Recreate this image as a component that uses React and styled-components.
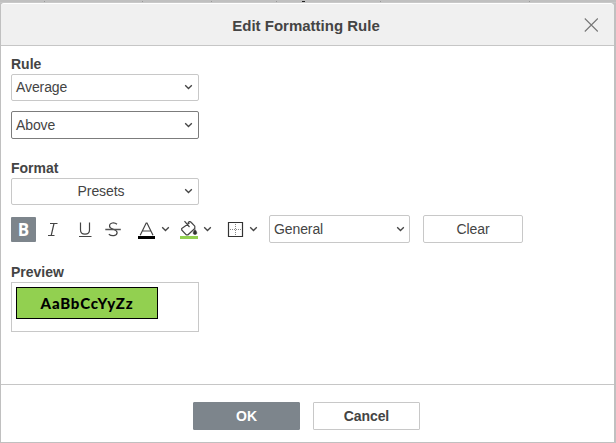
import React from "react";
import styled, { createGlobalStyle } from "styled-components";

const GlobalStyle = createGlobalStyle`
  * { box-sizing: border-box; }
  body {
    margin: 0;
    background: #c0c0c0;
    color: #444;
    font: 14px/16px "Liberation Sans", Arial, sans-serif;
    overflow: hidden;
  }
  button { font: inherit; color: inherit; padding: 0; }
`;

const Page = styled.div`
  width: 616px;
  height: 443px;
  padding: 3px 2px 1px 1px;
  background: linear-gradient(#c0c0c0 0 2px, #c8c8c8 2px 3px, #c0c0c0 3px);
`;

const SheetEdge = styled.svg`
  position: absolute;
  top: 0;
  left: 0;
`;

const Dialog = styled.section`
  display: flex;
  flex-direction: column;
  height: 439px;
  border-top: 1px solid #fff;
  border-radius: 3px 4px 0 0;
  background: #fff;
  overflow: hidden;
`;

const Header = styled.header`
  display: grid;
  grid-template-columns: 44px 1fr 44px;
  align-items: center;
  height: 42px;
  flex: none;
  background: #f0f0f0;
  border-bottom: 1px solid #c6c6c6;
`;

const Title = styled.h1`
  grid-column: 2;
  margin: 2px 3px 0 0;
  text-align: center;
  font-size: 15px;
  line-height: 18px;
`;

const CloseButton = styled.button`
  display: flex;
  width: 16px;
  height: 16px;
  margin: 1px 0 0 13px;
  border: 0;
  background: none;
`;

const Body = styled.main`
  flex: 1;
  padding: 10px 10px 0;
`;

const Group = styled.section`
  height: ${(p) => p.$height}px;
`;

const Label = styled.h2`
  margin: 0;
  height: 18px;
  font-size: 14px;
  line-height: 16px;
`;

const Select = styled.button`
  display: flex;
  align-items: center;
  justify-content: space-between;
  width: ${(p) => p.$width || 188}px;
  height: ${(p) => p.$height || 27}px;
  margin-left: ${(p) => p.$gap || 0}px;
  padding: 0 ${(p) => (p.$compact ? 4 : 5)}px 1px 4px;
  border: 1px solid ${(p) => (p.$focused ? "#7c7c7c" : "#c8c8c8")};
  border-radius: 2px;
  background: #fff;
`;

const SelectText = styled.span`
  flex: 1;
  text-align: ${(p) => (p.$centered ? "center" : "left")};
  padding-left: ${(p) => (p.$centered ? 2 : 0)}px;
  letter-spacing: -0.1px;
`;

const Stack = styled.div`
  display: flex;
  flex-direction: column;
  gap: 10px;
`;

const Toolbar = styled.div`
  display: flex;
  align-items: center;
  margin-top: 10px;
  height: 28px;
`;

const Tool = styled.button`
  display: flex;
  align-items: center;
  justify-content: center;
  width: ${(p) => p.$width}px;
  height: 25px;
  margin-left: ${(p) => p.$gap || 0}px;
  border: 0;
  border-radius: 1px;
  background: ${(p) => (p.$active ? "#7d858c" : "none")};
  color: ${(p) => (p.$active ? "#fff" : "#444")};
  font: 700 17px/25px "Open Sans", "Noto Sans", sans-serif;
`;

const Button = styled.button`
  width: ${(p) => p.$width}px;
  height: 28px;
  border: 1px solid ${(p) => (p.$primary ? "#7d858c" : "#c8c8c8")};
  border-radius: ${(p) => (p.$strong ? 1 : 2)}px;
  background: ${(p) => (p.$primary ? "#7d858c" : "#fff")};
  color: ${(p) => (p.$primary ? "#fff" : "#444")};
  font-weight: ${(p) => (p.$strong ? 700 : 400)};
  letter-spacing: -0.1px;
  margin-left: ${(p) => p.$gap || 0}px;
`;

const PreviewBox = styled.div`
  width: 188px;
  height: 50px;
  padding: 4px;
  border: 1px solid #c8c8c8;
`;

const PreviewCell = styled.div`
  width: 142px;
  height: 32px;
  border: 1px solid #000;
  background: #92d050;
  color: #000;
  font: 900 15px/31px Lato, "Noto Sans", sans-serif;
  letter-spacing: 0.8px;
  text-align: center;
`;

const Footer = styled.footer`
  display: flex;
  justify-content: center;
  gap: 13px;
  flex: none;
  height: 58px;
  padding: 17px 2px 0 0;
  border-top: 1px solid #c6c6c6;
`;

const Chevron = () => (
  <svg width="9" height="6" viewBox="0 0 9 6" fill="none" stroke="#444" strokeWidth="1.3">
    <path d="M1.2 1.2 4.5 4.5 7.8 1.2" />
  </svg>
);

const Icon = ({ children, width = 18 }) => (
  <svg width={width} height="19" viewBox={`0 0 ${width} 19`} fill="none" stroke="#444" strokeWidth="1.2">
    {children}
  </svg>
);

function Dropdown({ text, centered, ...rest }) {
  return (
    <Select {...rest}>
      <SelectText $centered={centered}>{text}</SelectText>
      <Chevron />
    </Select>
  );
}

export default function App() {
  return (
    <Page>
      <GlobalStyle />
      <SheetEdge width="616" height="3">
        <path d="M44 1.5h1M142 1.5h1M211 1.5h1M276 1.5h1M380 1.5h1M529 1.5h1" stroke="#999" />
        <path d="M302 1.5h3" stroke="#222" />
      </SheetEdge>
      <Dialog>
        <Header>
          <Title>Edit Formatting Rule</Title>
          <CloseButton aria-label="Close">
            <svg width="16" height="16" fill="none" stroke="#777" strokeWidth="1.1">
              <path d="M1.800 1.500l13 13M14.800 1.500l-13 13" />
            </svg>
          </CloseButton>
        </Header>
        <Body>
          <Group $height={104}>
            <Label>Rule</Label>
            <Stack>
              <Dropdown text="Average" />
              <Dropdown text="Above" $focused $height={28} />
            </Stack>
          </Group>
          <Group $height={104}>
            <Label>Format</Label>
            <Dropdown text="Presets" centered />
            <Toolbar>
              <Tool $width={25} $active>B</Tool>
              <Tool $width={18} $gap={8} aria-label="Italic">
                <Icon>
                  <path d="M6 3.500h7.500M4 15.500h6.500M10 3.500l-2.800 12" />
                </Icon>
              </Tool>
              <Tool $width={18} $gap={14} aria-label="Underline">
                <Icon>
                  <path d="M4.500 2.500v7.500c0 5.500 9 5.500 9 0V2.500M3 16.500h12.500" />
                </Icon>
              </Tool>
              <Tool $width={18} $gap={10} aria-label="Strikethrough">
                <Icon>
                  <path d="M13 4.300C10.500 2 5.500 2.500 5.500 6c0 4 7.600 2.500 7.600 6.500 0 3.700-5.500 4-8.300 1.700" />
                  <path d="M1.300 9.500h15.500" stroke="#555" strokeWidth="1.4" />
                </Icon>
              </Tool>
              <Tool $width={17} $gap={16} aria-label="Font color">
                <Icon width={17}>
                  <path d="M2.200 15.200 8.200 3h.8L15 15.200M4.500 11h8.200" />
                  <path d="M0 17.500h17" stroke="#000" strokeWidth="3" />
                </Icon>
              </Tool>
              <Tool $width={9} $gap={6} aria-label="Font color options"><Chevron /></Tool>
              <Tool $width={18} $gap={10} aria-label="Fill color">
                <Icon>
                  <path d="M9.500 3 1.700 8.600V10L6.300 14.800H8L14.800 8.500V6.200L11.300 2.500C10 1 8.500 1.500 8 3.500M4.500 1.200l5 5.800" />
                  <path d="M15 9.500c3 3.500 1.700 5 0 5s-3-1.500 0-5Z" fill="#333" stroke="#333" strokeWidth=".5" />
                  <path d="M0 17.500h18" stroke="#92d050" strokeWidth="3" />
                </Icon>
              </Tool>
              <Tool $width={9} $gap={5} aria-label="Fill color options"><Chevron /></Tool>
              <Tool $width={17} $gap={15} aria-label="Borders">
                <Icon width={17}>
                  <path d="M1.500 2.500h14v14h-14z" stroke="#333" />
                  <path d="M8.500 4v12M3 9.500h12" stroke="#888" strokeWidth="1" strokeDasharray="1 1" />
                </Icon>
              </Tool>
              <Tool $width={9} $gap={5} aria-label="Border options"><Chevron /></Tool>
              <Dropdown text="General" $width={141} $height={28} $gap={11} $compact />
              <Button $width={100} $gap={13}>Clear</Button>
            </Toolbar>
          </Group>
          <Label>Preview</Label>
          <PreviewBox>
            <PreviewCell>AaBbCcYyZz</PreviewCell>
          </PreviewBox>
        </Body>
        <Footer>
          <Button $width={107} $primary $strong>OK</Button>
          <Button $width={107} $strong>Cancel</Button>
        </Footer>
      </Dialog>
    </Page>
  );
}
